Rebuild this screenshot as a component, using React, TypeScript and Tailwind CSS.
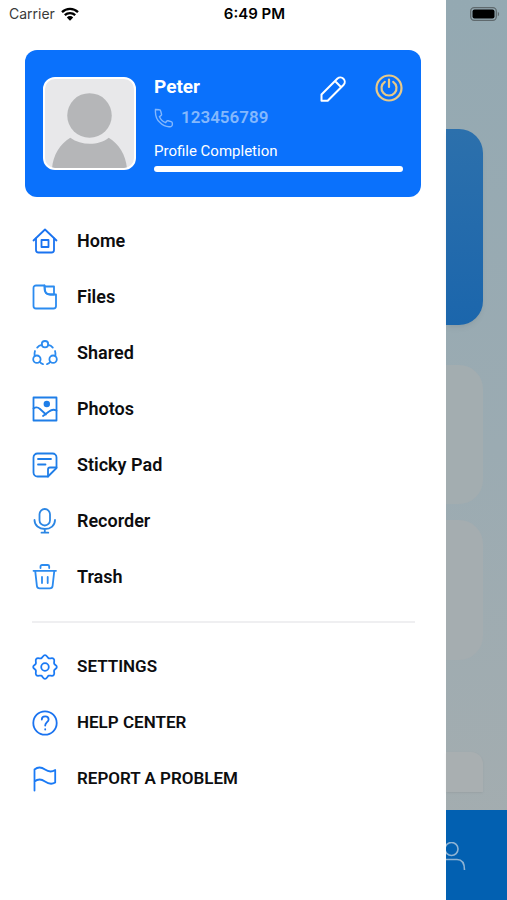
/**
 * Side drawer of the file manager app.
 *
 * The drawer takes most of the width, the dimmed home screen stays visible
 * on the right. The status bar lies over both.
 */

import React from "react";

interface MenuEntry {
  readonly label: string;
  readonly color: string;
  readonly icon: React.ReactNode;
}

const mainEntries: readonly MenuEntry[] = [
  {
    label: "Home",
    color: "text-[#1a73f0]",
    icon: (
      <>
        <path d="M1.500 12.500 13 1.500l11.500 11" />
        <path d="M4 10.500V22a2.500 2.500 0 0 0 2.500 2.500h13A2.500 2.500 0 0 0 22 22V10.500" />
        <path d="M9.500 12h7v7h-7z" />
      </>
    ),
  },
  {
    label: "Files",
    color: "text-[#2b8bf0]",
    icon: (
      <>
        <path d="M12.500 1.500H4A2.500 2.500 0 0 0 1.500 4v18A2.500 2.500 0 0 0 4 24.500h17.500A2.500 2.500 0 0 0 24 22V10.500h-5.500c-3.500 0-5.500-2-5.500-5z" />
        <path d="M12.500 1.500V5c0 3 2 5.500 5.500 5.500h4V2.500h-9.500" />
      </>
    ),
  },
  {
    label: "Shared",
    color: "text-[#2b8bf0]",
    icon: (
      <>
        <circle cx="13" cy="4.200" r="3.200" />
        <circle cx="4.900" cy="19.200" r="3.700" />
        <circle cx="21.100" cy="19.200" r="3.700" />
        <path d="M9.800 4.800C7.800 5.200 6.300 6.200 5.200 7.600M16.200 4.800c2 .4 3.500 1.400 4.600 2.800" />
        <path d="M2.600 16c-.3-1.800-.2-3.300.4-5M23.400 16c.3-1.800.2-3.300-.4-5" />
        <path d="M7.600 21.800c.9 1.200 2 2 3.400 2.400M18.400 21.800c-.9 1.200-2 2-3.400 2.400" />
      </>
    ),
  },
  {
    label: "Photos",
    color: "text-[#1f7ee8]",
    icon: (
      <>
        <path d="M1.500 1.500h23v23h-23z" />
        <circle cx="14.800" cy="8" r="2.300" fill="currentColor" />
        <path d="M1.500 12.500c2-1.500 4.500-1.300 6.500.5l6 5.500M11 20l6-4.500c2.500-2 5-2.200 7.500-1" />
      </>
    ),
  },
  {
    label: "Sticky Pad",
    color: "text-[#1f7ee8]",
    icon: (
      <>
        <path d="M16 24.500H5.500a4 4 0 0 1-4-4v-15a4 4 0 0 1 4-4h15a4 4 0 0 1 4 4V16z" />
        <path d="M16 24.500v-7a2 2 0 0 1 2-2h6.500M6 7h13M6 12.500h7.500" />
      </>
    ),
  },
  {
    label: "Recorder",
    color: "text-[#2b86e4]",
    icon: (
      <>
        <rect x="7.500" y="1" width="10.500" height="16.500" rx="5.200" />
        <path d="M2.500 12c0 5.500 4.500 9 10.300 9S23 17.500 23 12M12.800 21v3.500M9.500 24.700h6.800" />
      </>
    ),
  },
  {
    label: "Trash",
    color: "text-[#2b8bf0]",
    icon: (
      <>
        <path d="M1.500 6.800h22.500M3.200 6.800l1.700 15a2.800 2.800 0 0 0 2.800 2.500h10.100a2.800 2.800 0 0 0 2.800-2.500l1.700-15" />
        <path d="M8.500 4V2.500A1.500 1.500 0 0 1 10 1h5.700a1.500 1.500 0 0 1 1.500 1.500V4M10 13v6M15.700 13v6" />
      </>
    ),
  },
];

const supportEntries: readonly MenuEntry[] = [
  {
    label: "SETTINGS",
    color: "text-[#1a7af5]",
    icon: (
      <>
        <path d="M13 1.200c1.900 0 2.300 2.500 3.800 3.100s3.500-.9 4.900.5-.1 3.400.5 4.900 2.600 1.400 2.600 3.300-2 1.800-2.600 3.300.9 3.500-.5 4.900-3.400-.1-4.900.5-1.900 3.100-3.800 3.100-2.300-2.500-3.800-3.100-3.500.9-4.900-.5.1-3.400-.5-4.900S1.200 14.900 1.200 13s2-1.800 2.600-3.300-.9-3.500.5-4.900 3.400.1 4.900-.5S11.100 1.200 13 1.200z" />
        <circle cx="13" cy="13" r="3.800" />
      </>
    ),
  },
  {
    label: "HELP CENTER",
    color: "text-[#1a73f0]",
    icon: (
      <>
        <circle cx="13" cy="13" r="11.700" />
        <path d="M9.800 9.500c0-2 1.500-3.200 3.400-3.200s3.400 1.300 3.400 3.100c0 2.600-3.400 3.100-3.400 6.100" />
        <path d="M13.200 19.200v.4" />
      </>
    ),
  },
  {
    label: "REPORT A PROBLEM",
    color: "text-[#1a7af5]",
    icon: (
      <path d="M2.500 24.500V3.500c3-2.500 7-2.500 10.500 0s7 2.500 10.200.5v12.500c-3.200 2-6.700 1.500-10.200-1s-7.500-2.500-10.500 0" />
    ),
  },
];

export default function App(): React.ReactElement {
  return (
    <div className="relative flex min-h-screen bg-white font-[Roboto,'Noto_Sans',sans-serif] text-[#0d0d0f]">
      <StatusBar />
      <aside className="flex w-[88%] flex-col pt-[50px] pr-[25px] pb-8 pl-[25px]">
        <ProfileCard />
        <nav className="mt-4 pr-1.5 pl-[7px]">
          <MenuList entries={mainEntries} textClass="text-lg" />
          <hr className="my-4 border-t-2 border-[#efeff1]" />
          <MenuList entries={supportEntries} textClass="text-[17px]" />
        </nav>
      </aside>
      <HomePeek />
    </div>
  );
}

// ── StatusBar ─────────────────────────────────────────────────────────────────

function StatusBar(): React.ReactElement {
  return (
    <header className="absolute inset-x-0 top-0 grid h-[27px] grid-cols-3 items-center pr-[7px] pl-[9px] font-[Inter,sans-serif] text-sm text-black">
      <div className="flex items-center gap-1.5 text-[#3a3a3a]">
        Carrier
        <svg viewBox="0 0 18 14" className="h-3.5 w-[18px] text-black" aria-label="Wi-Fi">
          <path d="M1 5.200a11.500 11.500 0 0 1 16 0M3.800 8.200a7.500 7.500 0 0 1 10.400 0" fill="none" stroke="currentColor" strokeWidth="2.300" />
          <path d="M9 13.700 5.800 10.400a4.600 4.600 0 0 1 6.400 0z" fill="currentColor" />
        </svg>
      </div>
      <time className="text-center text-[15px] font-semibold">6:49 PM</time>
      <svg viewBox="0 0 30 14" className="h-3.5 w-[30px] justify-self-end" aria-label="Battery">
        <rect x=".7" y=".7" width="25.600" height="12.600" rx="3.500" fill="none" stroke="#5f696d" strokeWidth="1.300" />
        <rect x="2.500" y="2.500" width="22" height="9" rx="2" fill="#000" />
        <path d="M27.800 4.700v4.600c1.800-.8 1.800-3.800 0-4.600z" fill="#5f696d" />
      </svg>
    </header>
  );
}

// ── ProfileCard ───────────────────────────────────────────────────────────────

function ProfileCard(): React.ReactElement {
  return (
    <section className="flex items-start gap-[18px] rounded-xl bg-[#0a71fc] px-[18px] pt-[27px] pb-[25px] text-white">
      <svg
        viewBox="0 0 88 88"
        className="h-[93px] w-[93px] shrink-0 rounded-xl border-2 border-white bg-[#e8e8ea]"
        role="img"
        aria-label="Profile picture"
      >
        <circle cx="44" cy="36" r="22" fill="#b5b6b8" />
        <path d="M7 88c1-13 8-24 18-30 11 8 28 8 38 0 10 6 17 17 18 30z" fill="#b5b6b8" />
      </svg>
      <div className="min-w-0 flex-1">
        <div className="flex h-[30px] items-start">
          <h1 className="flex-1 text-[19px] leading-5 font-bold">Peter</h1>
          <button type="button" aria-label="Edit profile" className="-mt-px mr-7">
            <svg viewBox="0 0 28 28" className="size-7" fill="none" stroke="currentColor" strokeWidth="2" strokeLinejoin="round">
              <path d="M2.500 18.500 18.500 2.500a4.400 4.400 0 0 1 6.200 6.200L8.700 24.700H2.500zM16 5l6.200 6.200" />
            </svg>
          </button>
          <button type="button" aria-label="Log out" className="-mt-[3px]">
            <svg viewBox="0 0 28 28" className="size-7" fill="none" stroke="#e8c987" strokeWidth="2.200">
              <circle cx="14" cy="14" r="12.500" />
              <path d="M9.800 7.800a7.500 7.500 0 1 0 8.400 0M14 5.500V13" strokeLinecap="round" />
            </svg>
          </button>
        </div>
        <p className="flex h-[22px] items-center gap-[7px] text-[17px] font-semibold text-[#84b8fd]">
          <svg viewBox="0 0 20 20" className="size-5 shrink-0" fill="none" stroke="currentColor" strokeWidth="1.400" aria-hidden="true">
            <path d="M1.500 1.500C1 8 3 12 6 14.500c3.500 3.500 7 4.700 11 4 1.500-.3 1.500-2 1.300-3.500 0-.8-.5-1.200-1.200-1.400l-3-.8c-.7-.2-1.200 0-1.600.6l-.8 1.300c-2.800-1-5-3.200-6.200-6l1.400-1c.6-.4.8-.9.6-1.600l-.8-3c-.2-.7-.6-1.200-1.400-1.300-1.300-.2-2.700-.4-3.800-.3z" />
          </svg>
          123456789
        </p>
        <label htmlFor="profile-completion" className="mt-3 block text-[15px] leading-5">
          Profile Completion
        </label>
        <progress
          id="profile-completion"
          value={100}
          max={100}
          className="mt-[5px] block h-1.5 w-full appearance-none overflow-hidden rounded-full bg-white [&::-webkit-progress-bar]:bg-white [&::-webkit-progress-value]:bg-white"
        />
      </div>
    </section>
  );
}

// ── MenuList ──────────────────────────────────────────────────────────────────

interface MenuListProps {
  readonly entries: readonly MenuEntry[];
  readonly textClass: string;
}

function MenuList({ entries, textClass }: MenuListProps): React.ReactElement {
  return (
    <ul>
      {entries.map((entry) => (
        <li key={entry.label}>
          <a href="#" className={`flex h-14 items-center gap-[19px] font-semibold ${textClass}`}>
            <svg
              viewBox="0 0 26 26"
              className={`size-[26px] shrink-0 ${entry.color}`}
              fill="none"
              stroke="currentColor"
              strokeWidth="1.800"
              strokeLinecap="round"
              strokeLinejoin="round"
              aria-hidden="true"
            >
              {entry.icon}
            </svg>
            {entry.label}
          </a>
        </li>
      ))}
    </ul>
  );
}

// ── HomePeek ──────────────────────────────────────────────────────────────────

// Edge of the dimmed home screen behind the drawer
function HomePeek(): React.ReactElement {
  return (
    <main className="flex flex-1 flex-col bg-linear-to-b from-[#94a9b2] via-[#9babb2] to-[#a5adaf]">
      <div className="flex flex-col pt-[129px] pr-6">
        <div className="h-[196px] rounded-r-3xl bg-linear-to-b from-[#2c70ac] to-[#1b66ac] shadow-md shadow-black/5" />
        <div className="mt-10 h-[139px] rounded-r-3xl bg-[#a3adb0]" />
        <div className="mt-4 h-[140px] rounded-r-3xl bg-[#a5adb0]" />
        <div className="mt-[92px] h-10 rounded-tr-xl bg-[#a9afb1] shadow-sm shadow-black/5" />
      </div>
      <footer className="mt-auto h-[90px] bg-[#0260b1] pt-8">
        <svg viewBox="0 0 20 28" className="h-7 w-5" fill="none" stroke="#8fb3d3" strokeWidth="1.600" role="img" aria-label="Profile">
          <circle cx="5.500" cy="7" r="6.500" />
          <path d="M0 17.500h11c5 0 7.500 3.500 7.500 10.500" />
        </svg>
      </footer>
    </main>
  );
}
